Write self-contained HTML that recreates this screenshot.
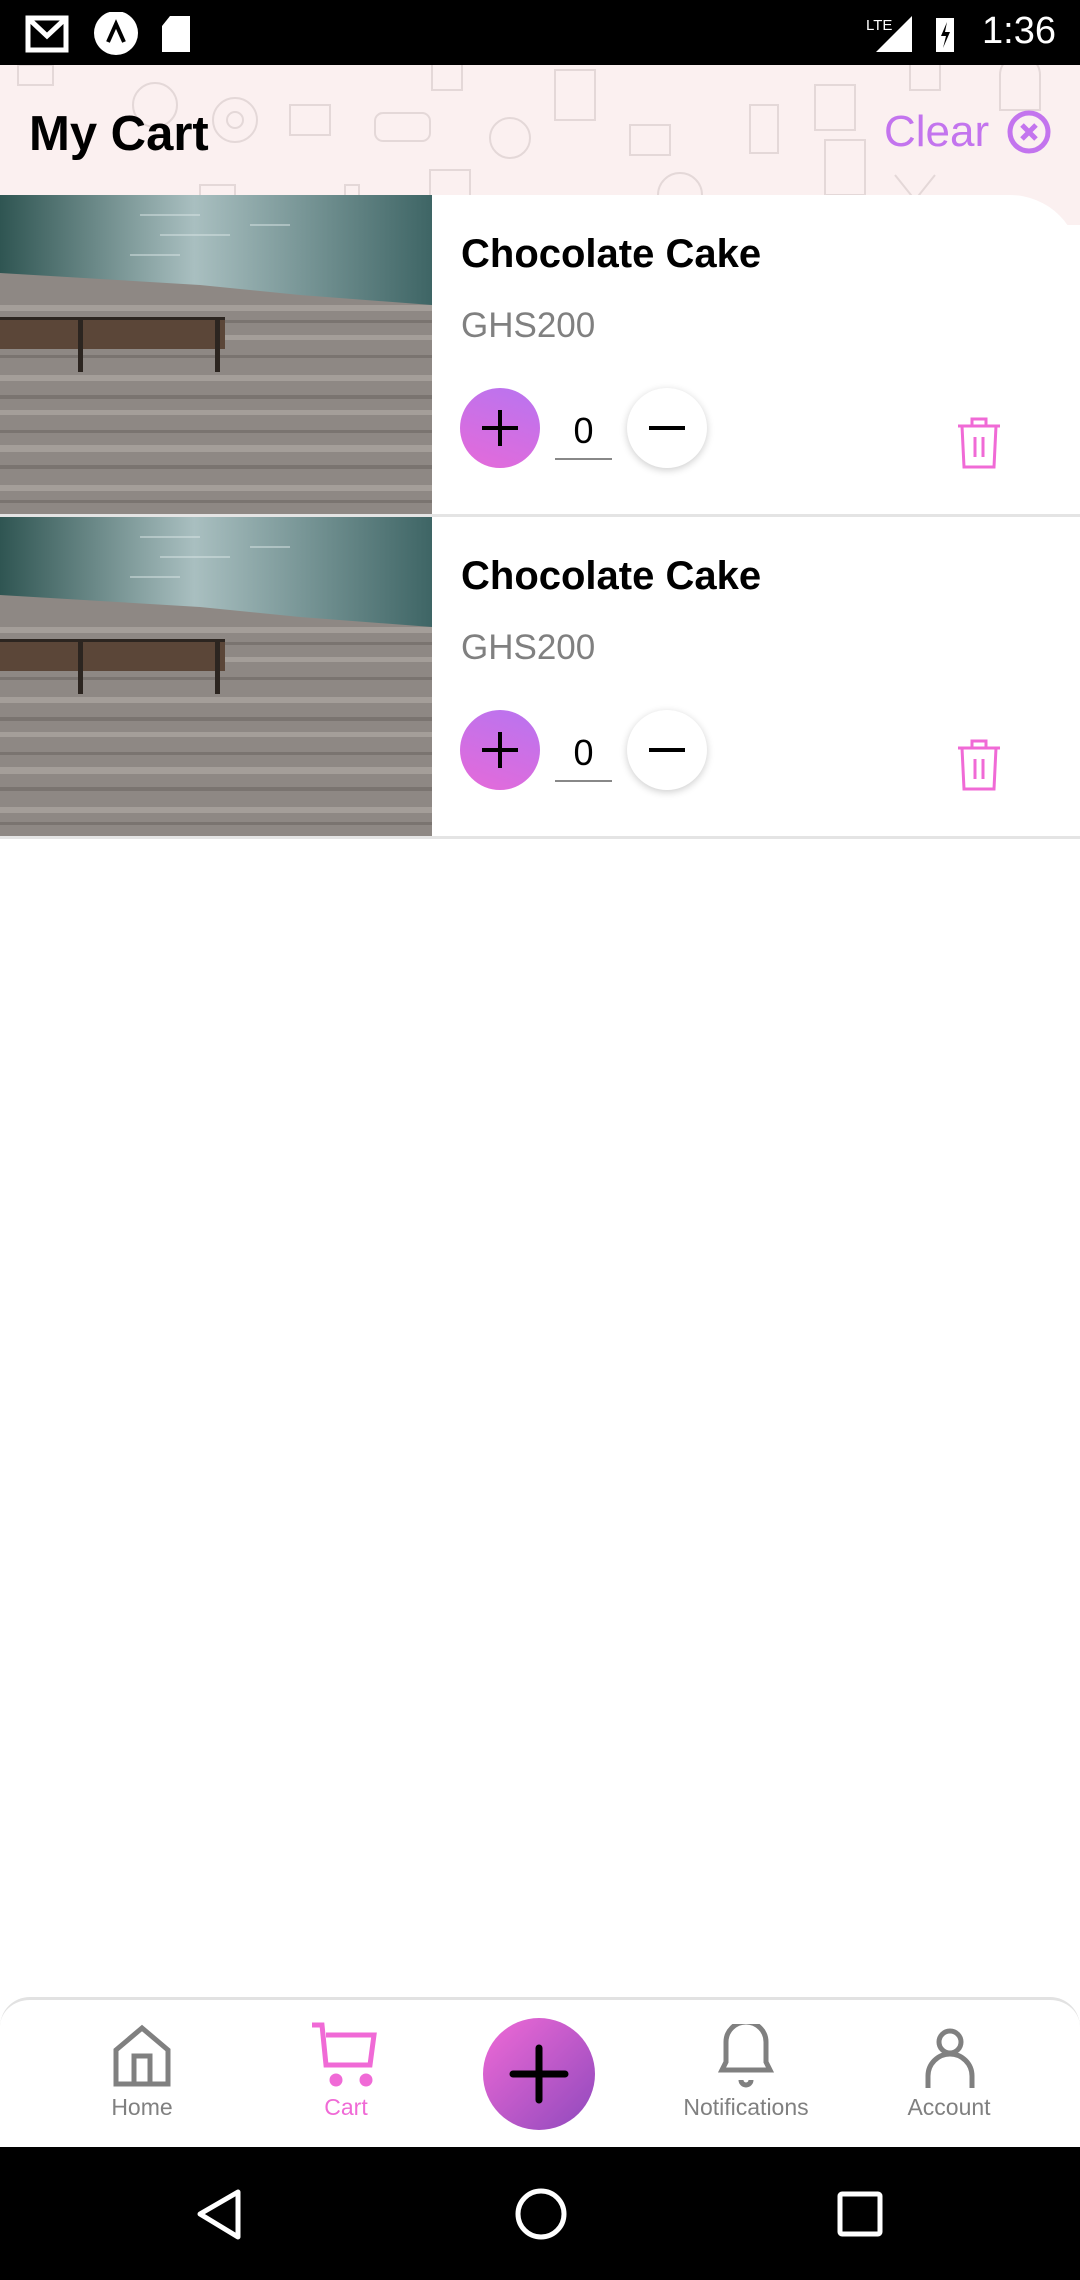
<!DOCTYPE html>
<html><head><meta charset="utf-8"><style>
*{margin:0;padding:0;box-sizing:border-box}
body{width:1080px;height:2280px;position:relative;background:#fff;font-family:"Liberation Sans",Roboto,sans-serif;overflow:hidden}
.abs{position:absolute}
.status{left:0;top:0;width:1080px;height:65px;background:#000}
.header{left:0;top:65px;width:1080px;height:160px;background:#fbf0f0;overflow:hidden}
.title{left:29px;top:106px;font-size:49px;font-weight:bold;color:#000}
.clear{left:884px;top:107px;font-size:44px;color:#c374ee}
.card{left:432px;width:648px;height:320px;background:#fff}
.name{font-size:40px;font-weight:bold;color:#000;left:461px}
.price{font-size:35px;color:#808080;left:461px}
.plus{width:80px;height:80px;border-radius:50%;background:linear-gradient(200deg,#b874f0,#e56ad9);left:460px}
.minus{width:80px;height:80px;border-radius:50%;background:#fff;box-shadow:0 2px 8px rgba(0,0,0,.2);left:627px}
.qty{left:555px;width:57px;font-size:36px;text-align:center;border-bottom:2px solid #888;height:50px}
.sep{left:0;width:1080px;height:3px;background:#e4e4e4}
.nav{left:0;top:1997px;width:1080px;height:150px;background:#fff;border-top:3px solid #e2e2e2;border-radius:30px 30px 0 0}
.lbl{font-size:23px;color:#808080;text-align:center;width:200px;top:2094px}
.sys{left:0;top:2147px;width:1080px;height:133px;background:#000}
</style></head><body>
<svg width="0" height="0" style="position:absolute"><defs>
<linearGradient id="wat" x1="0" y1="0" x2="1" y2="0"><stop offset="0" stop-color="#2f5552"/><stop offset="0.45" stop-color="#a9bfc0"/><stop offset="1" stop-color="#3e6565"/></linearGradient>
<symbol id="pic" viewBox="0 0 432 320">
<rect width="432" height="320" fill="#8e8884"/>
<g fill="#a49e99"><rect y="110" width="432" height="6"/><rect y="140" width="432" height="5"/><rect y="180" width="432" height="6"/><rect y="215" width="432" height="5"/><rect y="250" width="432" height="7"/><rect y="290" width="432" height="6"/></g>
<g fill="#7a7470"><rect y="125" width="432" height="3"/><rect y="160" width="432" height="3"/><rect y="200" width="432" height="4"/><rect y="235" width="432" height="3"/><rect y="270" width="432" height="4"/><rect y="305" width="432" height="3"/></g>
<polygon points="0,0 432,0 432,110 300,100 200,90 0,78" fill="url(#wat)"/>
<g stroke="#d8e4e4" stroke-width="2" opacity=".5"><path d="M140 20h60M160 40h70M130 60h50M250 30h40"/></g>
<g fill="#5b4638"><rect x="0" y="124" width="225" height="30"/></g>
<g fill="#2c2520"><rect x="78" y="122" width="5" height="55"/><rect x="215" y="124" width="5" height="53"/><rect x="0" y="122" width="225" height="3"/></g>
</symbol></defs></svg>

<div class="abs status"></div>
<svg class="abs" style="left:22px;top:12px" width="200" height="44" viewBox="0 0 200 44">
<path d="M6 6h38v32H6z" fill="none" stroke="#fff" stroke-width="5"/><path d="M8 8l17 16 17-16" fill="none" stroke="#fff" stroke-width="5"/>
<circle cx="94" cy="21" r="22" fill="#fff"/><path d="M86 30l8-18 8 18" fill="none" stroke="#000" stroke-width="4"/>
<path d="M148 4h20v36h-28V14z" fill="#fff"/>
</svg>
<svg class="abs" style="left:860px;top:12px" width="100" height="44" viewBox="0 0 100 44">
<text x="6" y="18" fill="#fff" font-size="15" font-family="Liberation Sans">LTE</text>
<polygon points="16,40 52,4 52,40" fill="#fff"/>
<rect x="76" y="6" width="18" height="34" fill="#fff"/><path d="M87 10l-6 14h5l-3 12 7-16h-5z" fill="#000"/>
</svg>
<div class="abs" style="left:982px;top:10px;color:#fff;font-size:38px">1:36</div>

<div class="abs header">
<svg width="1080" height="160" style="position:absolute;left:0;top:0" fill="none" stroke="#e4d8d8" stroke-width="2">
<rect x="18" y="0" width="35" height="20"/><circle cx="155" cy="40" r="22"/><circle cx="235" cy="55" r="22"/><circle cx="235" cy="55" r="8"/>
<rect x="290" y="40" width="40" height="30"/><rect x="375" y="48" width="55" height="28" rx="8"/>
<path d="M432 0v25h30V0"/><rect x="555" y="5" width="40" height="50"/><circle cx="510" cy="73" r="20"/>
<rect x="750" y="40" width="28" height="48"/><rect x="630" y="60" width="40" height="30"/><rect x="815" y="20" width="40" height="45"/>
<rect x="825" y="75" width="40" height="55"/><path d="M910 0v25h30V0"/><path d="M1000 10a20 20 0 0 1 40 0v35h-40z"/>
<rect x="78" y="140" width="40" height="20"/><rect x="200" y="120" width="35" height="40"/><path d="M345 120v40h14v-40z"/><rect x="430" y="105" width="40" height="40"/><circle cx="680" cy="130" r="22"/>
<rect x="985" y="140" width="40" height="20"/><path d="M895 110l40 50M935 110l-40 50"/>
</svg>
</div>
<div class="abs title">My Cart</div>
<div class="abs clear">Clear</div>
<svg class="abs" style="left:1005px;top:108px" width="48" height="48" viewBox="0 0 48 48"><circle cx="24" cy="24" r="19" fill="none" stroke="#c374ee" stroke-width="5"/><path d="M17 17l14 14M31 17L17 31" stroke="#c374ee" stroke-width="5"/></svg>

<!-- item 1 -->
<div class="abs card" style="top:195px;border-radius:0 70px 0 0"></div>
<svg class="abs" style="left:0;top:195px" width="432" height="320"><use href="#pic"/></svg>
<div class="abs name" style="top:232px">Chocolate Cake</div>
<div class="abs price" style="top:306px">GHS200</div>
<div class="abs plus" style="top:388px"></div>
<svg class="abs" style="left:460px;top:388px" width="80" height="80"><path d="M40 22v36M22 40h36" stroke="#000" stroke-width="4"/></svg>
<div class="abs qty" style="top:410px">0</div>
<div class="abs minus" style="top:388px"></div>
<svg class="abs" style="left:627px;top:388px" width="80" height="80"><path d="M22 40h36" stroke="#000" stroke-width="4"/></svg>
<svg class="abs" style="left:955px;top:415px" width="48" height="56" viewBox="0 0 48 56" fill="none" stroke="#f06ad6" stroke-width="3"><path d="M3 11h42M17 11V4h14v7M7 11l2 41h30l2-41M20 22v20M28 22v20"/></svg>
<div class="abs sep" style="top:514px"></div>

<!-- item 2 -->
<div class="abs card" style="top:517px"></div>
<svg class="abs" style="left:0;top:517px" width="432" height="320"><use href="#pic"/></svg>
<div class="abs name" style="top:554px">Chocolate Cake</div>
<div class="abs price" style="top:628px">GHS200</div>
<div class="abs plus" style="top:710px"></div>
<svg class="abs" style="left:460px;top:710px" width="80" height="80"><path d="M40 22v36M22 40h36" stroke="#000" stroke-width="4"/></svg>
<div class="abs qty" style="top:732px">0</div>
<div class="abs minus" style="top:710px"></div>
<svg class="abs" style="left:627px;top:710px" width="80" height="80"><path d="M22 40h36" stroke="#000" stroke-width="4"/></svg>
<svg class="abs" style="left:955px;top:737px" width="48" height="56" viewBox="0 0 48 56" fill="none" stroke="#f06ad6" stroke-width="3"><path d="M3 11h42M17 11V4h14v7M7 11l2 41h30l2-41M20 22v20M28 22v20"/></svg>
<div class="abs sep" style="top:836px"></div>

<!-- nav -->
<div class="abs nav"></div>
<svg class="abs" style="left:112px;top:2024px" width="60" height="64" viewBox="0 0 60 64" fill="none" stroke="#808080" stroke-width="5"><path d="M4 60V26L30 4l26 22v34zM22 60V32h16v28"/></svg>
<svg class="abs" style="left:310px;top:2022px" width="70" height="66" viewBox="0 0 70 66" fill="none" stroke="#f06ad6" stroke-width="5"><path d="M2 3h10l4 40h44l4-30H16"/><circle cx="26" cy="58" r="4" fill="#f06ad6"/><circle cx="56" cy="58" r="4" fill="#f06ad6"/></svg>
<svg class="abs" style="left:483px;top:2018px" width="112" height="112" viewBox="0 0 112 112"><defs><linearGradient id="g2" x1="0" y1="0" x2="1" y2="1"><stop offset="0" stop-color="#f06ad6"/><stop offset="1" stop-color="#8f49bd"/></linearGradient></defs><circle cx="56" cy="56" r="56" fill="url(#g2)"/><path d="M56 30v52M30 56h52" stroke="#000" stroke-width="7" stroke-linecap="round"/></svg>
<svg class="abs" style="left:716px;top:2024px" width="60" height="66" viewBox="0 0 60 66" fill="none" stroke="#808080" stroke-width="5"><path d="M6 46h48l-4-8V18a20 20 0 0 0-40 0v20z"/><path d="M25 56a5 5 0 0 0 10 0"/></svg>
<svg class="abs" style="left:922px;top:2026px" width="56" height="64" viewBox="0 0 56 64" fill="none" stroke="#808080" stroke-width="5"><circle cx="28" cy="16" r="11"/><path d="M6 62V50a22 22 0 0 1 44 0v12"/></svg>
<div class="abs lbl" style="left:42px">Home</div>
<div class="abs lbl" style="left:246px;color:#f06ad6">Cart</div>
<div class="abs lbl" style="left:646px">Notifications</div>
<div class="abs lbl" style="left:849px">Account</div>

<div class="abs sys"></div>
<svg class="abs" style="left:0;top:2147px" width="1080" height="133" fill="none" stroke="#fff" stroke-width="5">
<path d="M238 45L200 67l38 23z" stroke-linejoin="round"/>
<circle cx="541" cy="67" r="23"/>
<rect x="840" y="47" width="40" height="40" rx="2"/>
</svg>
</body></html>
